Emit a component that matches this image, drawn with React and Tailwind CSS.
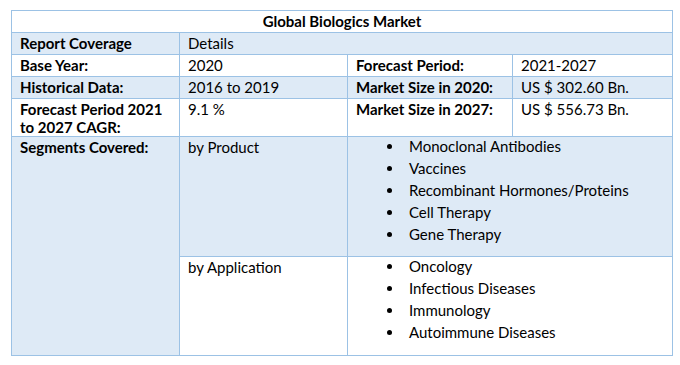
export default function App() {
  const font = { fontFamily: "Lato, 'Liberation Sans', sans-serif" };
  const cell = "border border-[#9cc2e5] px-[8px] pt-[1px] align-top leading-[18px]";
  const product = ["Monoclonal Antibodies", "Vaccines", "Recombinant Hormones/Proteins", "Cell Therapy", "Gene Therapy"];
  const app = ["Oncology", "Infectious Diseases", "Immunology", "Autoimmune Diseases"];
  const List = ({ items }) => (
    <ul className="pl-[39px]">
      {items.map((t) => (
        <li key={t} className="flex items-center h-[22px] leading-[18px] pb-[4px]">
          <span className="w-[5px] h-[5px] rounded-full bg-black mr-[17px] shrink-0" />
          <span>{t}</span>
        </li>
      ))}
    </ul>
  );
  return (
    <div className="w-[680px] h-[365px] bg-white pt-[10px] pl-[11px] text-[15px] text-black" style={font}>
      <table className="border-collapse table-fixed w-[661px]">
        <colgroup>
          <col className="w-[168px]" />
          <col className="w-[168px]" />
          <col className="w-[165px]" />
          <col className="w-[160px]" />
        </colgroup>
        <tbody>
          <tr className="h-[22px]">
            <td colSpan={4} className={`${cell} text-center font-bold`}>Global Biologics Market</td>
          </tr>
          <tr className="h-[22px] bg-[#deeaf6]">
            <td className={`${cell} font-bold`}>Report Coverage</td>
            <td colSpan={3} className={cell}>Details</td>
          </tr>
          <tr className="h-[22px]">
            <td className={`${cell} font-bold`}>Base Year:</td>
            <td className={cell}>2020</td>
            <td className={`${cell} font-bold`}>Forecast Period:</td>
            <td className={cell}>2021-2027</td>
          </tr>
          <tr className="h-[22px] bg-[#deeaf6]">
            <td className={`${cell} font-bold`}>Historical Data:</td>
            <td className={cell}>2016 to 2019</td>
            <td className={`${cell} font-bold`}>Market Size in 2020:</td>
            <td className={cell}>US $ 302.60 Bn.</td>
          </tr>
          <tr className="h-[37px]">
            <td className={`${cell} font-bold`}>Forecast Period 2021<br />to 2027 CAGR:</td>
            <td className={cell}>9.1 %</td>
            <td className={`${cell} font-bold`}>Market Size in 2027:</td>
            <td className={cell}>US $ 556.73 Bn.</td>
          </tr>
          <tr className="h-[120px] bg-[#deeaf6]">
            <td rowSpan={2} className={`${cell} font-bold`}>Segments Covered:</td>
            <td className={cell}>by Product</td>
            <td colSpan={2} className="border border-[#9cc2e5] align-top">
              <List items={product} />
            </td>
          </tr>
          <tr className="h-[99px] bg-white">
            <td className={cell}>by Application</td>
            <td colSpan={2} className="border border-[#9cc2e5] align-top">
              <List items={app} />
            </td>
          </tr>
        </tbody>
      </table>
    </div>
  );
}
